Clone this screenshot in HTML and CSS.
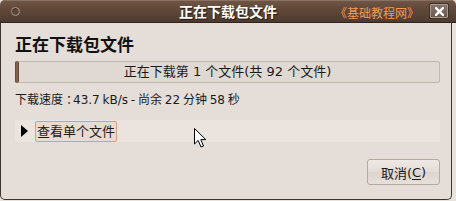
FILE: index.html
```html
<!DOCTYPE html>
<html lang="zh-CN">
<head>
<meta charset="utf-8">
<title>正在下载包文件</title>
<link rel="stylesheet" href="styles.css">
</head>
<body>
<div class="screen">
  <div class="titlebar">
    <div class="tb-left"><span class="menu-dot"></span></div>
    <div class="tb-title">正在下载包文件</div>
    <div class="tb-right">
      <span class="brand">《基础教程网》</span>
      <span class="close">
        <svg width="9" height="9" viewBox="0 0 9 9"><path d="M1 1 L8 8 M8 1 L1 8" stroke="#fff" stroke-width="2.4" stroke-linecap="square"/></svg>
      </span>
    </div>
  </div>
  <div class="window">
    <div class="heading">正在下载包文件</div>
    <div class="progress">
      <span class="fill"></span>
      <span class="ptext">正在下载第 1 个文件(共 92 个文件)</span>
    </div>
    <div class="speed">下载速度<span class="colon">：</span>43.7 kB/s - 尚余 22 分钟 58 秒</div>
    <div class="expander">
      <span class="arrow"></span>
      <span class="exp-btn">查看单个文件</span>
    </div>
    <div class="actions">
      <span class="btn">取消(<u>C</u>)</span>
    </div>
  </div>
  <svg class="cursor" width="14" height="22" viewBox="0 0 14 22">
    <path d="M0.5 0.5 L0.5 16 L4.2 12.4 L7 19 L9.5 18 L6.8 11.6 L11.8 11.6 Z" fill="#fff" stroke="#000" stroke-width="1" stroke-linejoin="miter"/>
  </svg>
</div>
</body>
</html>
```
FILE: styles.css
```css
* { box-sizing: border-box; }
html, body { margin: 0; padding: 0; }
body {
  width: 456px;
  height: 201px;
  overflow: hidden;
  background: #e8e2de;
  font-family: "DejaVu Sans", "Noto Sans CJK SC", sans-serif;
  color: #1a1a1a;
}
.screen { position: relative; width: 456px; height: 201px; }

.titlebar {
  height: 23px;
  display: grid;
  grid-template-columns: 1fr auto 1fr;
  align-items: center;
  background: linear-gradient(#705645 0%, #5f4839 45%, #4d3b30 100%);
  border-bottom: 1px solid #2e241d;
  border-radius: 5px 5px 0 0;
  box-shadow: inset 0 1px 0 #8a7262;
}
.tb-left { display: flex; align-items: center; padding-left: 11px; }
.menu-dot {
  width: 9px; height: 9px;
  border-radius: 50%;
  border: 1px solid #a99a8f;
  box-shadow: inset 1px 1px 0 #3a2d24;
}
.tb-title {
  color: #fff;
  font-family: "Noto Sans CJK SC", sans-serif;
  font-weight: bold;
  font-size: 14px;
  line-height: 18px;
  text-shadow: 1px 1px 1px #1e1610;
}
.tb-right {
  display: flex;
  align-items: center;
  justify-content: flex-end;
  padding-right: 8px;
  gap: 11px;
}
.brand {
  color: #f49a55;
  font-family: "Noto Sans CJK SC", sans-serif;
  font-size: 12px;
  line-height: 14px;
  padding-top: 3px;
}
.close {
  width: 18px; height: 14px;
  display: flex; align-items: center; justify-content: center;
  background: linear-gradient(#857569, #6a5a4f);
  border: 1px solid #a99b90;
  box-shadow: 0 0 0 1px #3e3129;
  border-radius: 1px;
}

.window {
  width: 452px;
  height: 177px;
  background: #e5ddd7;
  border: 1px solid #3c3630;
  border-top: 0;
  border-radius: 0 0 5px 5px;
  padding: 11px 11px 0 14px;
  display: flex;
  flex-direction: column;
}
.heading {
  font-family: "Noto Sans CJK SC", sans-serif;
  font-weight: bold;
  font-size: 17px;
  line-height: 20px;
  color: #111;
}
.progress {
  position: relative;
  margin-top: 7px;
  height: 22px;
  border: 1px solid #c3b6ab;
  border-radius: 2px;
  background: #e0d8d2;
  display: flex;
  align-items: center;
  justify-content: center;
}
.fill {
  position: absolute;
  left: -1px; top: -1px; bottom: -1px;
  width: 4px;
  border-radius: 2px;
  background: linear-gradient(90deg, #5e4434, #8d6a55 50%, #5e4434);
}
.ptext { font-size: 13px; line-height: 16px; }
.speed {
  margin-top: 9px;
  font-size: 12px;
  line-height: 16px;
  word-spacing: -1px;
}
.colon { margin-left: 3px; letter-spacing: -5px; }
.expander {
  margin-top: 12px;
  height: 22px;
  background: #ebe3de;
  display: flex;
  align-items: center;
  padding-left: 6px;
  gap: 7px;
}
.arrow {
  width: 0; height: 0;
  border-top: 6px solid transparent;
  border-bottom: 6px solid transparent;
  border-left: 7px solid #000;
}
.exp-btn {
  height: 21px;
  border: 1px solid #d49f82;
  border-radius: 2px;
  background: #eadbd2;
  font-size: 13px;
  line-height: 19px;
  padding: 0 1px;
}
.actions {
  margin-top: 17px;
  display: flex;
  justify-content: flex-end;
}
.btn {
  width: 73px;
  height: 26px;
  border: 1px solid #b4aaa1;
  border-radius: 3px;
  background: linear-gradient(#efe9e5, #e3dbd5 50%, #ddd4cd 51%, #e6dfda);
  display: flex; align-items: center; justify-content: center;
  font-size: 13px;
}
.btn u { text-underline-offset: 2px; }
.cursor { position: absolute; left: 194px; top: 128px; }
```
